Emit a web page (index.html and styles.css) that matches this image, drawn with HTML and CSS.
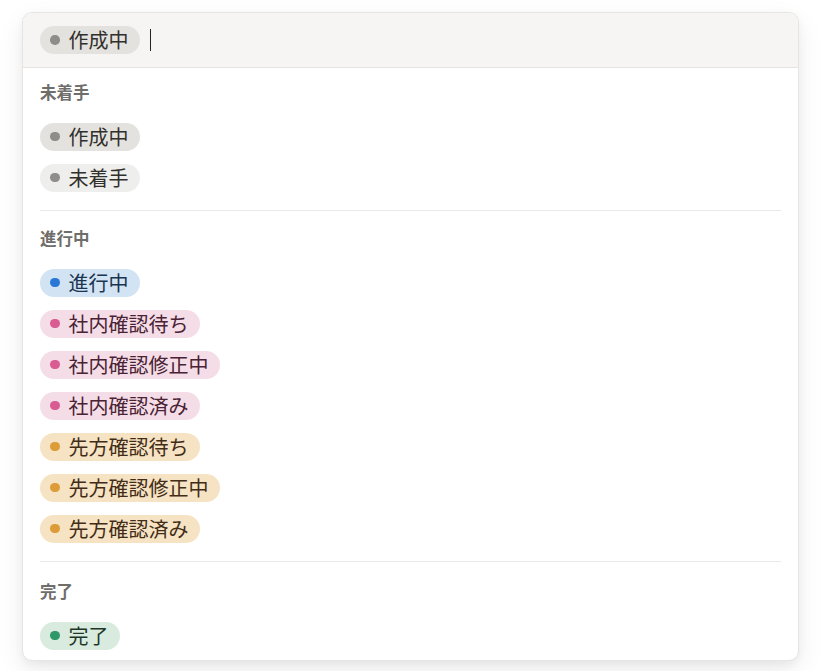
FILE: index.html
```html
<!DOCTYPE html>
<html lang="ja">
<head>
<meta charset="utf-8">
<link rel="stylesheet" href="styles.css">
</head>
<body>
<div class="panel">
  <div class="head">
    <span class="tag gray"><span class="dot"></span>作成中</span>
    <span class="caret"></span>
  </div>
  <div class="body">
    <section class="group">
      <div class="label">未着手</div>
      <div class="row"><span class="tag gray"><span class="dot"></span>作成中</span></div>
      <div class="row"><span class="tag light"><span class="dot"></span>未着手</span></div>
    </section>
    <section class="group">
      <div class="label">進行中</div>
      <div class="row"><span class="tag blue"><span class="dot"></span>進行中</span></div>
      <div class="row"><span class="tag pink"><span class="dot"></span>社内確認待ち</span></div>
      <div class="row"><span class="tag pink"><span class="dot"></span>社内確認修正中</span></div>
      <div class="row"><span class="tag pink"><span class="dot"></span>社内確認済み</span></div>
      <div class="row"><span class="tag orange"><span class="dot"></span>先方確認待ち</span></div>
      <div class="row"><span class="tag orange"><span class="dot"></span>先方確認修正中</span></div>
      <div class="row"><span class="tag orange"><span class="dot"></span>先方確認済み</span></div>
    </section>
    <section class="group last">
      <div class="label">完了</div>
      <div class="row"><span class="tag green"><span class="dot"></span>完了</span></div>
    </section>
  </div>
</div>
</body>
</html>
```
FILE: styles.css
```css
html, body {
  margin: 0;
  padding: 0;
}
body {
  background: #ffffff;
  font-family: "Noto Sans CJK JP", "Noto Sans", sans-serif;
  width: 824px;
  height: 671px;
  overflow: hidden;
}
.panel {
  margin: 12px 0 0 22px;
  width: 777px;
  height: 649px;
  box-sizing: border-box;
  background: #ffffff;
  border: 1px solid #e6e5e3;
  border-radius: 10px;
  box-shadow: 0 4px 10px rgba(15, 15, 15, 0.05), 0 10px 28px rgba(15, 15, 15, 0.07);
  overflow: hidden;
}
.head {
  height: 54px;
  background: #f6f5f3;
  border-bottom: 1px solid #e4e3e1;
  display: flex;
  align-items: center;
  padding-left: 17px;
  gap: 10px;
}
.caret {
  width: 1px;
  height: 22px;
  background: #222;
}
.body {
  padding: 0 17px;
}
.group {
  padding: 14px 0 12px;
  border-bottom: 1px solid #e9e9e7;
}
.group + .group {
  padding-top: 17px;
}
.group.last {
  padding-top: 19px;
  border-bottom: none;
}
.label {
  font-size: 16.5px;
  line-height: 20px;
  height: 20px;
  font-weight: 600;
  color: #6f6e6b;
  margin-bottom: 14px;
}
.row {
  height: 41px;
  display: flex;
  align-items: center;
}
.tag {
  display: inline-flex;
  align-items: center;
  height: 28px;
  padding: 0 11.5px 0 10px;
  border-radius: 14px;
  font-size: 20px;
  font-weight: 400;
  line-height: 28px;
  gap: 9px;
  white-space: nowrap;
}
.dot {
  width: 9.5px;
  height: 9.5px;
  border-radius: 50%;
  flex: none;
}
.gray { background: #e3e2df; color: #32302c; }
.gray .dot { background: #8e8d8a; }
.light { background: #eeeeec; color: #32302c; }
.light .dot { background: #8e8d8a; }
.blue { background: #d2e4f3; color: #1a3550; }
.blue .dot { background: #2a78d6; }
.pink { background: #f4dde7; color: #4a2234; }
.pink .dot { background: #d85b92; }
.orange { background: #f6e3c3; color: #422c17; }
.orange .dot { background: #dc9c37; }
.green { background: #d9ebdf; color: #1c3727; }
.green .dot { background: #2e9868; }
```
